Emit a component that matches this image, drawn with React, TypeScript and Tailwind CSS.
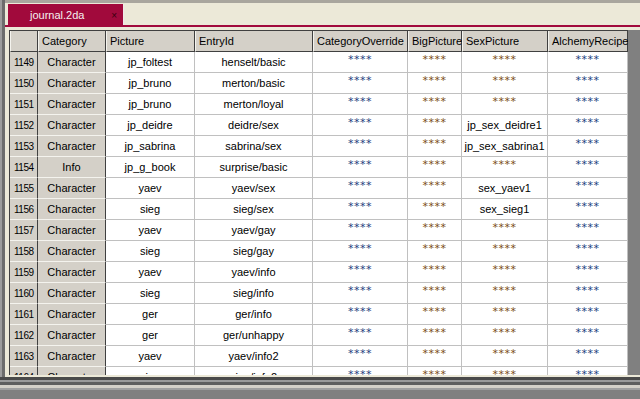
const headers = [
  "",
  "Category",
  "Picture",
  "EntryId",
  "CategoryOverride",
  "BigPicture",
  "SexPicture",
  "AlchemyRecipe",
];

const S = "****";

const rows: string[][] = [
  ["1149", "Character", "jp_foltest", "henselt/basic", S, S, S, S],
  ["1150", "Character", "jp_bruno", "merton/basic", S, S, S, S],
  ["1151", "Character", "jp_bruno", "merton/loyal", S, S, S, S],
  ["1152", "Character", "jp_deidre", "deidre/sex", S, S, "jp_sex_deidre1", S],
  ["1153", "Character", "jp_sabrina", "sabrina/sex", S, S, "jp_sex_sabrina1", S],
  ["1154", "Info", "jp_g_book", "surprise/basic", S, S, S, S],
  ["1155", "Character", "yaev", "yaev/sex", S, S, "sex_yaev1", S],
  ["1156", "Character", "sieg", "sieg/sex", S, S, "sex_sieg1", S],
  ["1157", "Character", "yaev", "yaev/gay", S, S, S, S],
  ["1158", "Character", "sieg", "sieg/gay", S, S, S, S],
  ["1159", "Character", "yaev", "yaev/info", S, S, S, S],
  ["1160", "Character", "sieg", "sieg/info", S, S, S, S],
  ["1161", "Character", "ger", "ger/info", S, S, S, S],
  ["1162", "Character", "ger", "ger/unhappy", S, S, S, S],
  ["1163", "Character", "yaev", "yaev/info2", S, S, S, S],
  ["1164", "Character", "sieg", "sieg/info2", S, S, S, S],
];

// blue-ish stars in override/alchemy columns, brownish in picture columns
const starColor = (col: number) =>
  col === 4 || col === 7 ? "text-[#23407c]" : "text-[#7a4c16]";

const Cell = ({ value, col }: { value: string; col: number }) => {
  if (col === 0) {
    return (
      <div className="h-[21px] flex items-center pl-[4px] bg-[#d4d0c8] border-r border-r-[#404040] border-b border-b-[#f4f3ee] text-[10px] tracking-[-0.5px]">
        {value}
      </div>
    );
  }
  if (col === 1) {
    return (
      <div className="h-[21px] flex items-center justify-center bg-[#d4d0c8] border-r border-r-[#404040] border-b border-b-[#f4f3ee]">
        {value}
      </div>
    );
  }
  const isStar = value === S;
  return (
    <div className="h-[21px] flex items-center justify-center bg-white border-r border-b border-[#c0c0c0]">
      {isStar ? (
        <span
          className={`font-['DejaVu_Sans',sans-serif] text-[11px] tracking-[0.5px] -mt-[3px] ${starColor(col)}`}
        >
          {value}
        </span>
      ) : (
        value
      )}
    </div>
  );
};

export default function App() {
  return (
    <div className="w-[640px] h-[399px] overflow-hidden flex flex-col bg-[#808080] font-['Liberation_Sans',Arial,sans-serif] text-[11px] text-black">
      <div className="flex h-[377px]">
        <div className="w-[2px] bg-[#9c9c9c]" />
        <div className="w-[3px] bg-[#6c6c6c]" />
        <div className="flex-1 flex flex-col bg-[#ece9d8] border-t-[3px] border-[#a9a69e]">
          {/* tab bar */}
          <div className="h-[22px] flex pl-[3px]">
            <div className="mt-[1px] w-[116px] flex items-center pt-[2px] bg-[#a10a3c] border-r border-[#f0e8ea] text-[#f4f0f0]">
              <span className="ml-[22px]">journal.2da</span>
              <span className="ml-auto mr-[6px] text-[#3a0010] text-[10px]">×</span>
            </div>
          </div>
          <div className="h-[2px] bg-[#a10a3c]" />
          <div className="h-[3px]" />

          {/* grid */}
          <div className="flex h-[345px] pl-[4px]">
            <div className="w-[619px] overflow-hidden border-l border-t border-[#404040]">
              <div className="grid grid-cols-[28px_68px_89px_118px_95px_54px_86px_80px]">
                {headers.map((h, i) => (
                  <div
                    key={i}
                    className="h-[21px] flex items-center pl-[3px] bg-[#d4d0c8] border-r border-b border-[#404040] border-l border-l-[#f4f3ee] whitespace-nowrap"
                  >
                    {h}
                  </div>
                ))}
                {rows.map((r) =>
                  r.map((v, c) => <Cell key={r[0] + "-" + c} value={v} col={c} />)
                )}
              </div>
            </div>
            <div className="flex-1 bg-[#808080]" />
          </div>
        </div>
      </div>
      <div className="h-[3px] bg-[#4a4a4a]" />
      <div className="h-[2px] bg-[#9a9a9a]" />
      <div className="h-[3px] bg-[#5e5e5e]" />
      <div className="h-[3px] bg-[#d4d0c8]" />
      <div className="h-[2px] bg-[#a0a0a0]" />
      <div className="flex-1 bg-[#808080]" />
    </div>
  );
}
